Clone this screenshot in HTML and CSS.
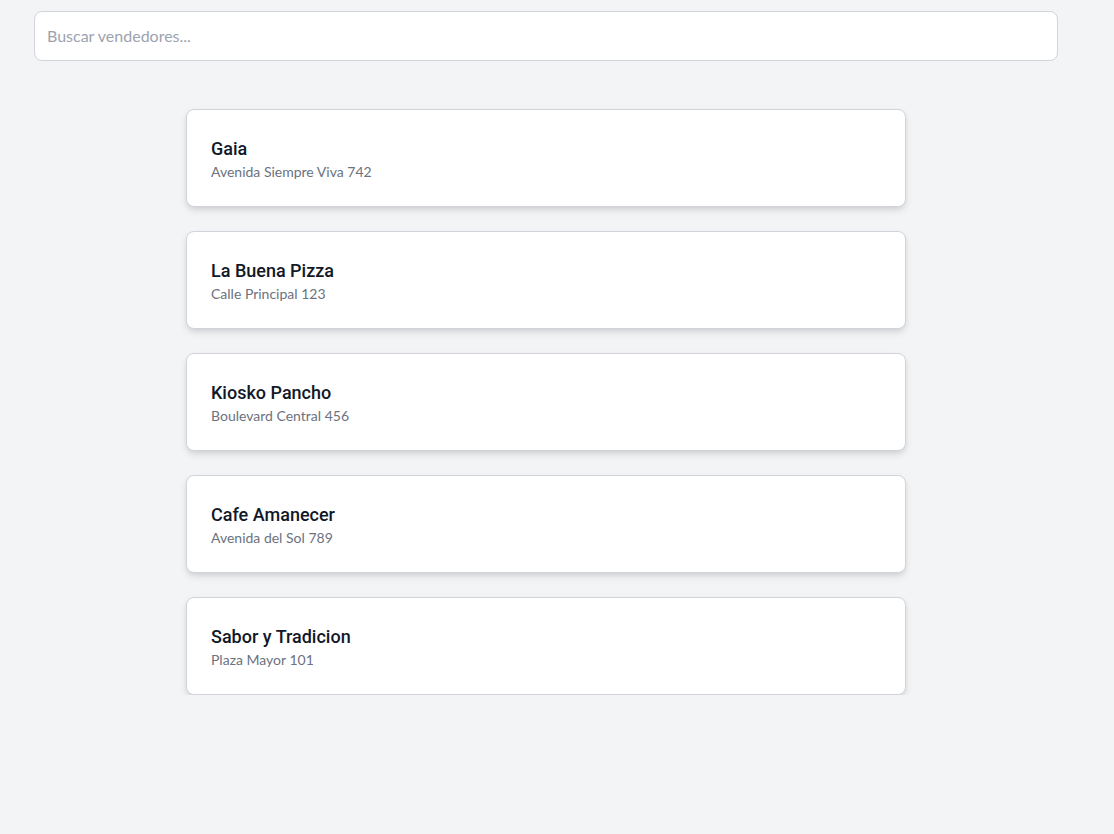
FILE: index.html
```html
<!DOCTYPE html>
<html lang="es">
<head>
<meta charset="utf-8">
<title>Vendedores</title>
<link rel="stylesheet" href="styles.css">
</head>
<body>
<div class="page">
  <input class="search" type="text" placeholder="Buscar vendedores...">
  <ul class="list">
    <li class="card"><h2 class="name">Gaia</h2><p class="addr">Avenida Siempre Viva 742</p></li>
    <li class="card"><h2 class="name">La Buena Pizza</h2><p class="addr">Calle Principal 123</p></li>
    <li class="card"><h2 class="name">Kiosko Pancho</h2><p class="addr">Boulevard Central 456</p></li>
    <li class="card"><h2 class="name">Cafe Amanecer</h2><p class="addr">Avenida del Sol 789</p></li>
    <li class="card"><h2 class="name">Sabor y Tradicion</h2><p class="addr">Plaza Mayor 101</p></li>
  </ul>
</div>
</body>
</html>
```
FILE: styles.css
```css
* { box-sizing: border-box; }
html, body {
  margin: 0;
  padding: 0;
  background: #f3f4f6;
  font-family: Lato, "Noto Sans", sans-serif;
}
.page {
  width: 1024px;
  margin-left: 34px;
  padding-top: 11px;
}
.search {
  display: block;
  width: 100%;
  height: 50px;
  padding: 0 12px 2px;
  border: 1px solid #d1d5db;
  border-radius: 8px;
  background: #fff;
  font-family: Lato, "Noto Sans", sans-serif;
  font-size: 16px;
  color: #111827;
  outline: none;
}
.search::placeholder { color: #9ca3af; }
.list {
  list-style: none;
  margin: 48px auto 0;
  padding: 0;
  width: 720px;
  display: flex;
  flex-direction: column;
  gap: 24px;
}
.card {
  background: #fff;
  border: 1px solid #d1d5db;
  border-radius: 8px;
  padding: 24px;
  box-shadow: 0 4px 8px -1px rgba(0,0,0,0.11), 0 2px 5px -1px rgba(0,0,0,0.08);
}
.name {
  margin: 0;
  padding-top: 2px;
  font-family: Roboto, "Noto Sans", sans-serif;
  font-size: 18px;
  line-height: 26px;
  font-weight: 500;
  color: #111827;
}
.addr {
  margin: 0;
  font-size: 14px;
  line-height: 20px;
  color: #6b7280;
}
```
